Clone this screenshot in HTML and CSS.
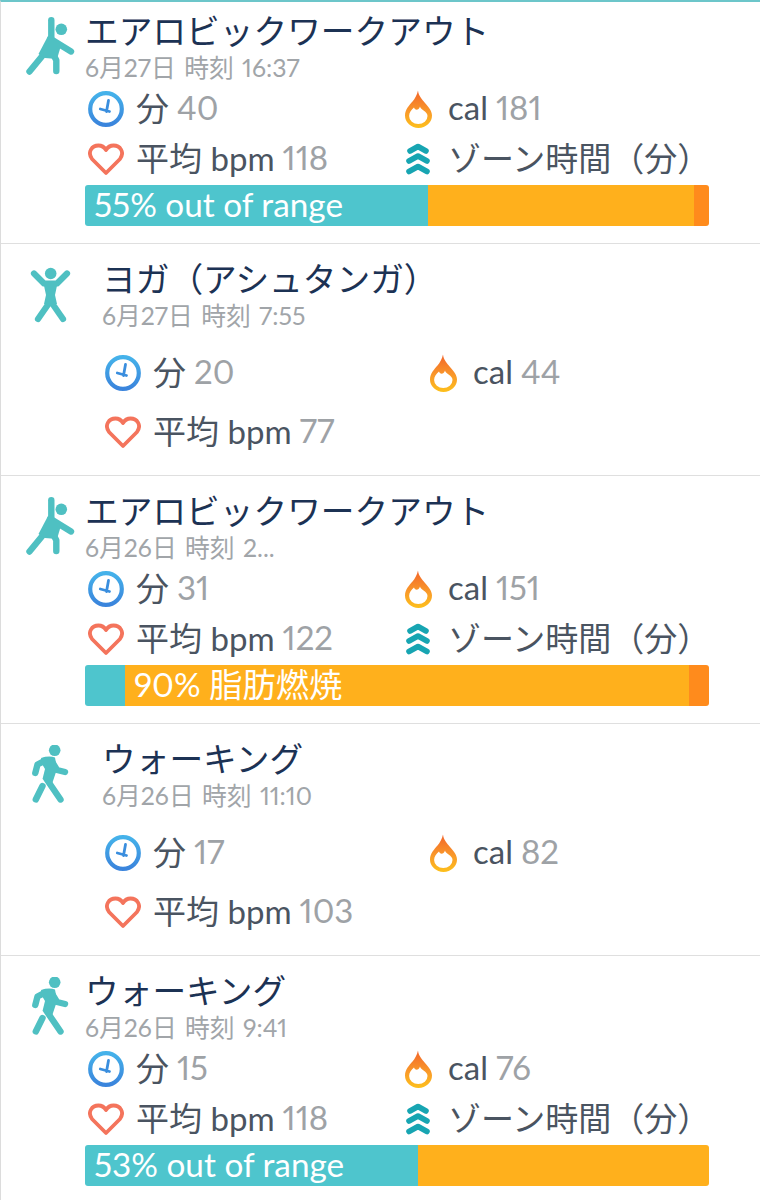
FILE: index.html
```html
<!DOCTYPE html>
<html lang="ja">
<head>
  <meta charset="UTF-8" />
  <meta name="viewport" content="width=device-width, initial-scale=1.0"/>
  <title>エクササイズ履歴</title>
  <link rel="stylesheet" href="styles.css">
</head>
<body>
  <svg class="sprites" width="0" height="0" aria-hidden="true">
    <defs>
      <linearGradient id="clockGrad" x1="0" y1="0" x2="0" y2="1">
        <stop offset="0" stop-color="#45b2ea"/>
        <stop offset="1" stop-color="#3a84dc"/>
      </linearGradient>
      <linearGradient id="flameGrad" x1="0" y1="0" x2="0" y2="1">
        <stop offset="0" stop-color="#f2642a"/>
        <stop offset="0.55" stop-color="#f9982a"/>
        <stop offset="1" stop-color="#fdc01c"/>
      </linearGradient>
      <symbol id="aerobic" viewBox="0 0 50 60">
        <circle cx="36.3" cy="12.3" r="5.8" fill="#4fc0c2"/>
        <g fill="none" stroke="#4fc0c2" stroke-width="6.400" stroke-linecap="round" stroke-linejoin="round">
          <path d="M26.300 3.200V21"/>
          <path d="M25.300 21.700L46 34.500"/>
          <path d="M23 32L4.500 54.500"/>
          <path d="M28.700 38.300L31.300 43.300V54"/>
        </g>
        <path d="M23 19L36 28.500L32 42L20 41L13.500 37Z" fill="#4fc0c2"/>
      </symbol>
      <symbol id="yoga" viewBox="0 0 50 60">
        <circle cx="25.7" cy="8.5" r="5.8" fill="#4fc0c2"/>
        <g fill="none" stroke="#4fc0c2" stroke-width="6.200" stroke-linecap="round" stroke-linejoin="round">
          <path d="M9 8.500L19 18.500H32L42 8.500"/>
          <path d="M25.500 36L13 54"/>
          <path d="M25.500 36L38 54"/>
        </g>
        <path d="M18 16H33L30 30L32 39H19L21 30Z" fill="#4fc0c2"/>
      </symbol>
      <symbol id="walk" viewBox="0 0 50 60">
        <circle cx="29.700" cy="5.300" r="5.800" fill="#4fc0c2"/>
        <g fill="none" stroke="#4fc0c2" stroke-width="6.400" stroke-linecap="round" stroke-linejoin="round">
          <path d="M20 15.700L12.500 19.500L10.300 28"/>
          <path d="M27 16.700L32 25L40 27"/>
          <path d="M21.500 34L35.500 54.500"/>
          <path d="M17.500 41L10.800 54.500"/>
        </g>
        <path d="M16 13Q24 10.500 30 12.500L32 24L27 39L17.500 34L20 24L17 19Z" fill="#4fc0c2"/>
      </symbol>
      <symbol id="clock" viewBox="0 0 36 36">
        <circle cx="18" cy="18" r="15.800" fill="none" stroke="url(#clockGrad)" stroke-width="4.200"/>
        <path d="M20.500 9.500L18.500 20.500M12.300 18L21.500 20.500" fill="none" stroke="#3a8ede" stroke-width="2.800" stroke-linecap="round"/>
      </symbol>
      <symbol id="flame" viewBox="0 0 36 38">
        <path fill="url(#flameGrad)" fill-rule="evenodd" d="M18 0.500C18.500 6 22 9 25 13C28.500 17 32 21 32 25.500A13.500 12.500 0 0 1 5 25.500C5 19.500 9.500 15 12.500 11.500C15 8.500 17 5 18 0.500ZM20 16.500C20.500 20 27.500 21 27.500 26A9.200 8 0 0 1 9.100 26C9.100 22.500 11.500 19.500 14 17.500C14.500 20 18.500 21 20 16.500Z"/>
      </symbol>
      <symbol id="heart" viewBox="0 0 36 38">
        <path d="M18 33L4 19C-1 12 4 5.500 10.500 5.500C14 5.500 16.500 7.500 18 10C19.500 7.500 22 5.500 25.500 5.500C32 5.500 37 12 32 19Z" fill="none" stroke="#f4745c" stroke-width="3.800" stroke-linejoin="round"/>
      </symbol>
      <symbol id="zones" viewBox="0 0 36 38">
        <g fill="none" stroke="#17a5b2" stroke-width="5.600" stroke-linecap="round" stroke-linejoin="round">
          <path d="M10 11L18 6.500L26 11"/>
          <path d="M9 21L18 16L27 21"/>
          <path d="M9 31.500L18 26.500L27 31.500"/>
        </g>
      </symbol>
    </defs>
  </svg>

  <main class="list">
    <section class="row row-zones">
      <svg class="figure"><use href="#aerobic"/></svg>
      <div class="body">
        <h2 class="title">エアロビックワークアウト</h2>
        <p class="date">6月27日 時刻 16:37</p>
        <div class="stats">
          <div class="stat"><svg class="icon"><use href="#clock"/></svg><span class="label">分</span><span class="value">40</span></div>
          <div class="stat"><svg class="icon"><use href="#flame"/></svg><span class="label">cal</span><span class="value">181</span></div>
          <div class="stat"><svg class="icon"><use href="#heart"/></svg><span class="label">平均 bpm</span><span class="value">118</span></div>
          <div class="stat"><svg class="icon"><use href="#zones"/></svg><span class="label">ゾーン時間（分）</span></div>
        </div>
        <div class="bar">
          <div class="seg seg-out" style="width:55%">55% out of range</div>
          <div class="seg seg-fat" style="width:42.6%"></div>
          <div class="seg seg-cardio" style="width:2.4%"></div>
        </div>
      </div>
    </section>

    <section class="row row-plain">
      <svg class="figure"><use href="#yoga"/></svg>
      <div class="body">
        <h2 class="title">ヨガ（アシュタンガ）</h2>
        <p class="date">6月27日 時刻 7:55</p>
        <div class="stats">
          <div class="stat"><svg class="icon"><use href="#clock"/></svg><span class="label">分</span><span class="value">20</span></div>
          <div class="stat"><svg class="icon"><use href="#flame"/></svg><span class="label">cal</span><span class="value">44</span></div>
          <div class="stat"><svg class="icon"><use href="#heart"/></svg><span class="label">平均 bpm</span><span class="value">77</span></div>
        </div>
      </div>
    </section>

    <section class="row row-zones">
      <svg class="figure"><use href="#aerobic"/></svg>
      <div class="body">
        <h2 class="title">エアロビックワークアウト</h2>
        <p class="date">6月26日 時刻 2...</p>
        <div class="stats">
          <div class="stat"><svg class="icon"><use href="#clock"/></svg><span class="label">分</span><span class="value">31</span></div>
          <div class="stat"><svg class="icon"><use href="#flame"/></svg><span class="label">cal</span><span class="value">151</span></div>
          <div class="stat"><svg class="icon"><use href="#heart"/></svg><span class="label">平均 bpm</span><span class="value">122</span></div>
          <div class="stat"><svg class="icon"><use href="#zones"/></svg><span class="label">ゾーン時間（分）</span></div>
        </div>
        <div class="bar">
          <div class="seg seg-out" style="width:6.4%"></div>
          <div class="seg seg-fat" style="width:90.4%">90% 脂肪燃焼</div>
          <div class="seg seg-cardio" style="width:3.2%"></div>
        </div>
      </div>
    </section>

    <section class="row row-plain">
      <svg class="figure"><use href="#walk"/></svg>
      <div class="body">
        <h2 class="title">ウォーキング</h2>
        <p class="date">6月26日 時刻 11:10</p>
        <div class="stats">
          <div class="stat"><svg class="icon"><use href="#clock"/></svg><span class="label">分</span><span class="value">17</span></div>
          <div class="stat"><svg class="icon"><use href="#flame"/></svg><span class="label">cal</span><span class="value">82</span></div>
          <div class="stat"><svg class="icon"><use href="#heart"/></svg><span class="label">平均 bpm</span><span class="value">103</span></div>
        </div>
      </div>
    </section>

    <section class="row row-zones">
      <svg class="figure"><use href="#walk"/></svg>
      <div class="body">
        <h2 class="title">ウォーキング</h2>
        <p class="date">6月26日 時刻 9:41</p>
        <div class="stats">
          <div class="stat"><svg class="icon"><use href="#clock"/></svg><span class="label">分</span><span class="value">15</span></div>
          <div class="stat"><svg class="icon"><use href="#flame"/></svg><span class="label">cal</span><span class="value">76</span></div>
          <div class="stat"><svg class="icon"><use href="#heart"/></svg><span class="label">平均 bpm</span><span class="value">118</span></div>
          <div class="stat"><svg class="icon"><use href="#zones"/></svg><span class="label">ゾーン時間（分）</span></div>
        </div>
        <div class="bar">
          <div class="seg seg-out" style="width:53.4%">53% out of range</div>
          <div class="seg seg-fat" style="width:46.6%"></div>
        </div>
      </div>
    </section>
  </main>
</body>
</html>
```

FILE: styles.css
```css
* {
  box-sizing: border-box;
}

body {
  margin: 0;
  background: white;
  font-family: Lato, "Noto Sans CJK JP", sans-serif;
  font-variant-numeric: proportional-nums;
  color: #4a5461;
}

.sprites {
  position: absolute;
}

.list {
  border-top: 2px solid #6cc6ca;
  border-left: 1px solid #dcdcdc;
}

.row {
  display: flex;
  padding: 15px 51px 17px 24px;
  border-bottom: 1px solid #dfdfdf;
}

.row:first-child {
  padding-top: 9px;
}

.row:last-child {
  padding-bottom: 14px;
  border-bottom: none;
}

.figure {
  flex: none;
  width: 50px;
  height: 60px;
  margin-top: 6px;
}

.body {
  flex: 1;
  min-width: 0;
  margin-left: 10px;
}

.title {
  margin: 0;
  font-size: 33.7px;
  line-height: 40px;
  font-weight: 400;
  color: #1c3254;
}

.date {
  margin: 0;
  font-size: 24.8px;
  line-height: 34px;
  word-spacing: 2px;
  color: #a1a5a9;
}

.stats {
  display: grid;
  grid-template-columns: 312px 1fr;
  row-gap: 2px;
  padding-left: 3px;
}

.stat {
  display: flex;
  align-items: center;
  height: 48px;
  font-size: 33px;
}

.icon {
  flex: none;
  width: 36px;
  height: 38px;
  margin-right: 12px;
}

.label,
.value {
  padding-bottom: 4px;
  white-space: nowrap;
}

.value {
  margin-left: 8px;
  color: #9ea2a6;
}

.bar {
  display: flex;
  height: 41px;
  margin-top: 2px;
  border-radius: 3px;
  overflow: hidden;
  color: white;
  font-size: 33.3px;
  line-height: 39px;
}

.seg {
  padding-left: 9px;
  white-space: nowrap;
}

.seg-out {
  background: #4ec5cd;
}

.seg-fat {
  background: #ffb01c;
}

.seg-cardio {
  background: #ff8b1c;
}

.row-plain {
  padding-bottom: 19px;
}

.row-plain .body {
  margin-left: 27px;
}

.row-plain .stats {
  grid-template-columns: 320px 1fr;
  row-gap: 11px;
  margin-top: 16px;
  padding-left: 3px;
}
```
